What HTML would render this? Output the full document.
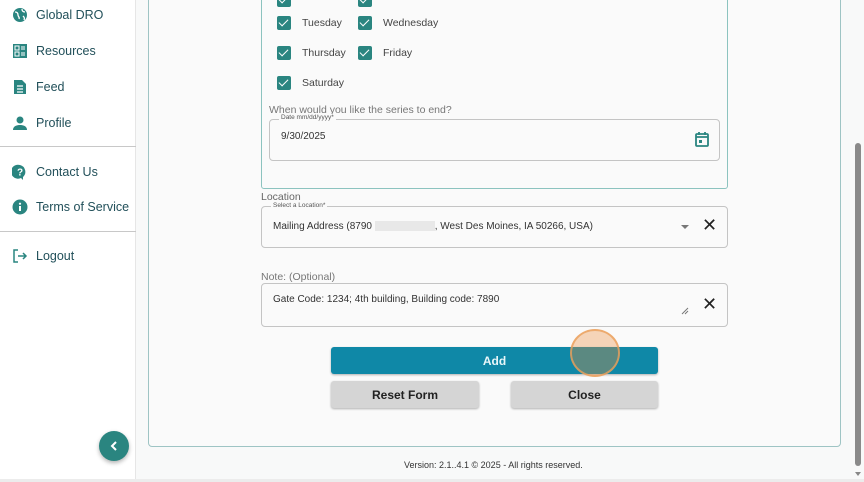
<!DOCTYPE html>
<html><head><meta charset="utf-8"><style>
*{box-sizing:border-box;margin:0;padding:0}
body{width:864px;height:482px;overflow:hidden;background:#f8f9f9;font-family:"Liberation Sans","DejaVu Sans",sans-serif;position:relative;color:#333}
.side{position:absolute;left:0;top:0;width:136px;height:482px;background:#fff;border-right:1px solid #e6e6e6}
.it{position:absolute;left:12px;display:flex;align-items:center;font-size:12.5px;color:#22505a}
.it svg{width:16px;height:16px;margin-right:8px}
.hr{position:absolute;left:0;width:136px;height:1px;background:#c8c8c8}
.abs{position:absolute}
.card{position:absolute;left:148px;top:-10px;width:693px;height:457px;border:1px solid #9ec4c4;border-radius:4px;background:#fafafa}
.panel{position:absolute;left:261px;top:-10px;width:467px;height:199px;border:1px solid #8cc3bf;border-radius:3px}
.cb{position:absolute;width:14px;height:14px;background:#2a8580;border-radius:2px}
.cb:after{content:"";position:absolute;left:4px;top:1px;width:4px;height:8px;border:solid #fff;border-width:0 1.5px 1.5px 0;transform:rotate(45deg)}
.lbl{position:absolute;font-size:10.5px;color:#444}
.field{position:absolute;border:1px solid #c4c4c4;border-radius:4px;background:#fafafa}
.leg{position:absolute;font-size:6.5px;color:#555;background:#fafafa;padding:0 2px}
.x{position:absolute;font-size:18px;color:#222;font-family:"DejaVu Sans",sans-serif}
.btn{position:absolute;display:flex;align-items:center;justify-content:center;font-size:12px;font-weight:bold;border-radius:3px;box-shadow:0 1px 2px rgba(0,0,0,.3)}
</style></head><body>
<div class="side">
 <div class="it" style="top:7px"><svg viewBox="0 0 16 16"><circle cx="8" cy="8" r="7" fill="#2a8580"/><path d="M3 5c2 0 3 1 3 3s2 2 1 4M10 2c0 2 1 3 3 3M11 9c1 1 2 2 1 4" stroke="#fff" stroke-width="1.3" fill="none"/></svg>Global DRO</div>
 <div class="it" style="top:43px"><svg viewBox="0 0 16 16"><rect x="1" y="1" width="14" height="14" fill="#2a8580"/><rect x="3" y="3" width="4" height="4" fill="none" stroke="#fff"/><rect x="3" y="9" width="4" height="4" fill="none" stroke="#fff"/><path d="M9 4h4M9 6h4M9 10h4M9 12h4" stroke="#fff"/></svg>Resources</div>
 <div class="it" style="top:79px"><svg viewBox="0 0 16 16"><path d="M2 1h8l4 4v10H2z" fill="#2a8580"/><path d="M5 7h6M5 10h6M5 13h6" stroke="#fff" stroke-width="1.2"/></svg>Feed</div>
 <div class="it" style="top:115px"><svg viewBox="0 0 16 16"><circle cx="8" cy="5" r="3.5" fill="#2a8580"/><path d="M1 15c0-4 4-5 7-5s7 1 7 5z" fill="#2a8580"/></svg>Profile</div>
 <div class="hr" style="top:146px"></div>
 <div class="it" style="top:164px"><svg viewBox="0 0 16 16"><path d="M8 1a7 7 0 1 0 1 13l2 2v-3A7 7 0 0 0 8 1z" fill="#2a8580"/><text x="8" y="11.5" font-size="10" font-weight="bold" fill="#fff" text-anchor="middle" font-family="Liberation Sans">?</text></svg>Contact Us</div>
 <div class="it" style="top:199px"><svg viewBox="0 0 16 16"><circle cx="8" cy="8" r="7.5" fill="#2a8580"/><rect x="7" y="7" width="2" height="5" fill="#fff"/><circle cx="8" cy="4.7" r="1.1" fill="#fff"/></svg>Terms of Service</div>
 <div class="hr" style="top:231px"></div>
 <div class="it" style="top:248px"><svg viewBox="0 0 16 16"><path d="M6 2H2v12h4M6 8h8M11 5l3 3-3 3" stroke="#2a8580" stroke-width="1.5" fill="none"/></svg>Logout</div>
 <div class="abs" style="left:99px;top:431px;width:30px;height:30px;border-radius:50%;background:#2a8580;box-shadow:0 2px 4px rgba(0,0,0,.3)"><svg viewBox="0 0 30 30" width="30" height="30"><path d="M17 11l-4 4 4 4" stroke="#fff" stroke-width="2" fill="none"/></svg></div>
</div>
<div class="card"></div>
<div class="panel"></div>
<div class="cb" style="left:277px;top:-7px"></div><div class="cb" style="left:358px;top:-7px"></div>
<div class="cb" style="left:277px;top:16px"></div><div class="lbl" style="left:302px;top:17px">Tuesday</div>
<div class="cb" style="left:358px;top:16px"></div><div class="lbl" style="left:383px;top:17px">Wednesday</div>
<div class="cb" style="left:277px;top:46px"></div><div class="lbl" style="left:302px;top:47px">Thursday</div>
<div class="cb" style="left:358px;top:46px"></div><div class="lbl" style="left:383px;top:47px">Friday</div>
<div class="cb" style="left:277px;top:76px"></div><div class="lbl" style="left:302px;top:77px">Saturday</div>
<div class="lbl" style="left:269px;top:104px;color:#777">When would you like the series to end?</div>
<div class="field" style="left:269px;top:119px;width:451px;height:42px"></div>
<div class="leg" style="left:279px;top:114px">Date mm/dd/yyyy*</div>
<div class="lbl" style="left:281px;top:131px;color:#333;font-size:10px">9/30/2025</div>
<svg class="abs" style="left:695px;top:131px" width="14" height="16" viewBox="0 0 14 16"><rect x="1" y="3" width="12" height="12" rx="1" fill="none" stroke="#2a8580" stroke-width="1.8"/><path d="M1 6h12M4 1v3M10 1v3" stroke="#2a8580" stroke-width="1.8"/><rect x="4" y="9" width="3" height="3" fill="#2a8580"/></svg>
<div class="lbl" style="left:261px;top:191px;color:#666">Location</div>
<div class="field" style="left:261px;top:206px;width:467px;height:42px"></div>
<div class="leg" style="left:271px;top:202px">Select a Location*</div>
<div class="lbl" style="left:273px;top:221px;font-size:10px;color:#333">Mailing Address (8790 <span style="display:inline-block;width:60px;height:10px;background:#e8e8e8;vertical-align:middle"></span>, West Des Moines, IA 50266, USA)</div>
<div class="abs" style="left:681px;top:225px;width:0;height:0;border-left:4px solid transparent;border-right:4px solid transparent;border-top:4px solid #777"></div>
<div class="x" style="left:702px;top:215px">✕</div>
<div class="lbl" style="left:261px;top:271px;color:#777">Note: (Optional)</div>
<div class="field" style="left:261px;top:283px;width:467px;height:44px"></div>
<div class="lbl" style="left:273px;top:294px;font-size:10px;color:#333">Gate Code: 1234; 4th building, Building code: 7890</div>
<div class="x" style="left:702px;top:294px">✕</div>
<svg class="abs" style="left:681px;top:307px" width="8" height="8"><path d="M1 7L7 1M4 7L7 4" stroke="#777"/></svg>
<div class="btn" style="left:331px;top:347px;width:327px;height:27px;background:#0f88a7;color:#e8f6f9">Add</div>
<div class="btn" style="left:331px;top:381px;width:148px;height:27px;background:#d5d5d5;color:#222">Reset Form</div>
<div class="btn" style="left:511px;top:381px;width:147px;height:27px;background:#d5d5d5;color:#222">Close</div>
<div class="abs" style="left:570px;top:329px;width:50px;height:48px;border-radius:50%;background:rgba(235,140,60,.35);border:2px solid rgba(235,160,90,.8)"></div>
<div class="lbl" style="left:404px;top:460px;font-size:9px;color:#333">Version: 2.1..4.1 © 2025 - All rights reserved.</div>
<div class="abs" style="left:855px;top:143px;width:6px;height:323px;background:#8a8a8a;border-radius:3px"></div>
<div class="abs" style="left:855px;top:472px;width:0;height:0;border-left:3px solid transparent;border-right:3px solid transparent;border-top:4px solid #888"></div>
<div class="abs" style="left:0;top:479px;width:864px;height:3px;background:#ececec"></div>
</body></html>
